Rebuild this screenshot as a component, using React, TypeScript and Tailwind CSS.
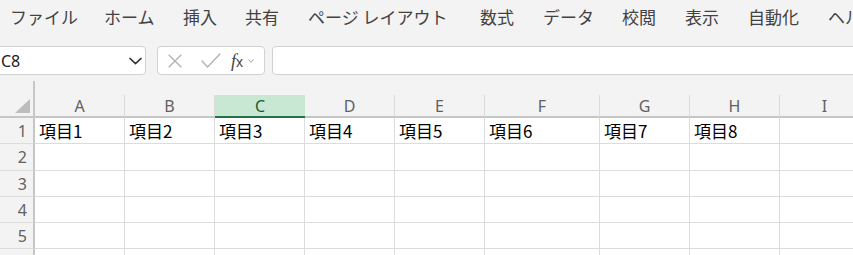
import React from "react";

const menuItems = [
  { label: "ファイル", w: "w-[94px]" },
  { label: "ホーム", w: "w-[79px]" },
  { label: "挿入", w: "w-[62px]" },
  { label: "共有", w: "w-[63px]" },
  { label: "ページ レイアウト", w: "w-[172px]" },
  { label: "数式", w: "w-[63px]" },
  { label: "データ", w: "w-[79px]" },
  { label: "校閲", w: "w-[63px]" },
  { label: "表示", w: "w-[63px]" },
  { label: "自動化", w: "w-[80px]" },
  { label: "ヘルプ", w: "w-[80px]" },
];

const columns = [
  { key: "A", w: "w-[90px]" },
  { key: "B", w: "w-[90px]" },
  { key: "C", w: "w-[90px]" },
  { key: "D", w: "w-[90px]" },
  { key: "E", w: "w-[90px]" },
  { key: "F", w: "w-[115px]" },
  { key: "G", w: "w-[90px]" },
  { key: "H", w: "w-[90px]" },
  { key: "I", w: "w-[90px]" },
];

const rows = [
  { h: "h-[26px]", cells: ["項目1", "項目2", "項目3", "項目4", "項目5", "項目6", "項目7", "項目8", ""] },
  { h: "h-[27px]", cells: [] as string[] },
  { h: "h-[26px]", cells: [] as string[] },
  { h: "h-[26px]", cells: [] as string[] },
  { h: "h-[26px]", cells: [] as string[] },
  { h: "h-[26px]", cells: [] as string[] },
];

const ChevronDown: React.FC<{ className?: string }> = ({ className }) => (
  <svg viewBox="0 0 14 8" className={className} fill="none">
    <path d="M1 1.2 L7 6.8 L13 1.2" stroke="currentColor" strokeWidth="1.6" strokeLinecap="round" strokeLinejoin="round" />
  </svg>
);

const App: React.FC = () => {
  return (
    <div className="w-[853px] h-[255px] overflow-hidden bg-[#f3f3f3] font-['Noto_Sans','Noto_Sans_CJK_JP',sans-serif]">
      {/* MENU */}
      <div className="h-[33px] flex items-center pl-[10px] whitespace-nowrap text-[17px] text-[#424242] font-['Noto_Sans_CJK_JP',sans-serif]">
        {menuItems.map((m) => (
          <span key={m.label} className={`${m.w} shrink-0 leading-none`}>
            {m.label}
          </span>
        ))}
      </div>

      {/* FORMULA BAR */}
      <div className="mt-[13px] h-[29px] flex items-stretch">
        <div className="ml-[-5px] w-[151px] shrink-0 flex items-center justify-between pl-[5px] pr-[3px] bg-white border border-[#d1d1d1] rounded-[4px]">
          <span className="text-[16px] text-[#222] leading-none">C8</span>
          <ChevronDown className="w-[13px] h-[8px] text-[#333]" />
        </div>
        <div className="ml-[11px] w-[108px] shrink-0 flex items-center bg-white border border-[#d1d1d1] rounded-[4px]">
          <svg viewBox="0 0 14 14" className="ml-[10px] w-[14px] h-[14px]" fill="none">
            <path d="M0.7 0.7 L13.3 13.3 M13.3 0.7 L0.7 13.3" stroke="#b3b3b3" strokeWidth="1.4" />
          </svg>
          <svg viewBox="0 0 20 15" className="ml-[19px] w-[20px] h-[15px]" fill="none">
            <path d="M0.6 7.6 L6.6 14 L19.4 0.6" stroke="#b3b3b3" strokeWidth="1.4" />
          </svg>
          <span className="ml-[10px] text-[#444] leading-none whitespace-nowrap">
            <span className="italic font-['Liberation_Serif',serif] text-[18px]">f</span>
            <span className="text-[14px] font-['Liberation_Sans',sans-serif]">x</span>
          </span>
          <svg viewBox="0 0 6 4" className="ml-[5px] w-[6px] h-[4px]" fill="none">
            <path d="M0.5 0.5 L3 3.3 L5.5 0.5" stroke="#a0a0a0" strokeWidth="1" />
          </svg>
        </div>
        <div className="ml-[7px] w-[620px] shrink-0 bg-white border border-[#d1d1d1] rounded-[4px]" />
      </div>

      {/* GRID */}
      <div className="mt-[6px] flex flex-col">
        {/* header row */}
        <div className="flex h-[37px]">
          <div className="w-[35px] shrink-0 flex items-end justify-end border-r-2 border-[#c6c6c6] border-b-2 pr-[3px] pb-[3px]">
            <svg viewBox="0 0 15 14" className="w-[15px] h-[14px]">
              <polygon points="15,0 15,14 0,14" fill="#bdbdbd" />
            </svg>
          </div>
          {columns.map((c) => {
            const selected = c.key === "C";
            return (
              <div key={c.key} className={`${c.w} shrink-0 flex flex-col justify-end`}>
                <div
                  className={
                    selected
                      ? "h-[23px] flex items-center justify-center bg-[#c9e8d4] border-b-2 border-[#217346] text-[#185c37] text-[16px] leading-none"
                      : "h-[23px] flex items-center justify-center border-r border-[#dcdcdc] border-b-2 border-b-[#c6c6c6] text-[#616161] text-[16px] leading-none"
                  }
                >
                  {c.key}
                </div>
              </div>
            );
          })}
        </div>

        {/* body rows */}
        {rows.map((r, i) => (
          <div key={i} className={`flex ${r.h}`}>
            <div className="w-[35px] shrink-0 flex items-center justify-end pr-[6px] border-r-2 border-[#c6c6c6] border-b border-b-[#dcdcdc] text-[16px] text-[#616161] leading-none">
              {i + 1}
            </div>
            {columns.map((c, j) => (
              <div
                key={c.key}
                className={`${c.w} shrink-0 flex items-center pl-[4px] bg-white border-r border-b border-[#dcdcdc] text-[17px] text-black leading-none whitespace-nowrap font-['Noto_Sans_CJK_JP',sans-serif]`}
              >
                {r.cells[j] ?? ""}
              </div>
            ))}
          </div>
        ))}
      </div>
    </div>
  );
};

export default App;
